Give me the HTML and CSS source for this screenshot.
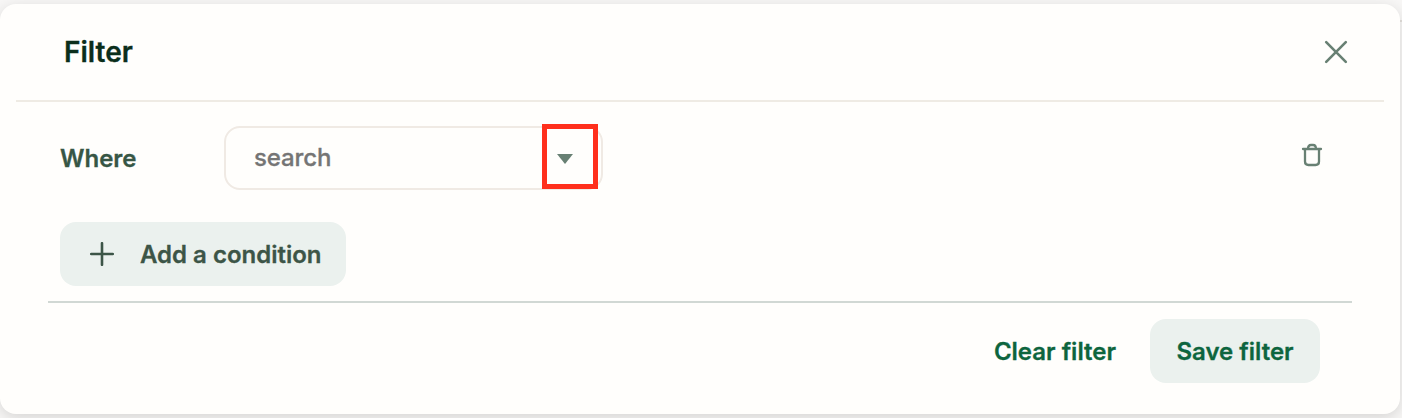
FILE: index.html
```
<!DOCTYPE html>
<html lang="en">
<head>
<meta charset="utf-8">
<title>Filter</title>
<link rel="stylesheet" href="styles.css">
</head>
<body>
<section class="dialog">
  <header class="dialog-header">
    <h1 class="title">Filter</h1>
    <button class="close" aria-label="Close">
      <svg width="24" height="24" viewBox="0 0 24 24"><path d="M2.2 2.2 21.8 21.8M21.8 2.2 2.2 21.8"/></svg>
    </button>
  </header>
  <div class="dialog-body">
    <div class="condition">
      <span class="label">Where</span>
      <div class="select">
        <span class="placeholder">search</span>
        <svg class="caret" width="16" height="10" viewBox="0 0 16 10"><path d="M0 0H16L8 10Z"/></svg>
        <span class="highlight"></span>
      </div>
      <button class="trash" aria-label="Delete">
        <svg width="22" height="24" viewBox="0 0 22 24"><path d="M2 6H20M4 6V18.5Q4 22 7.5 22H14.5Q18 22 18 18.5V6M7 6Q7 2 10 2H12Q15 2 15 6"/></svg>
      </button>
    </div>
    <button class="button add">
      <svg width="24" height="24" viewBox="0 0 24 24"><path d="M12 1.2V22.8M1.2 12H22.8"/></svg>
      <span class="add-text">Add a condition</span>
    </button>
  </div>
  <footer class="dialog-footer">
    <button class="clear">Clear filter</button>
    <button class="button save">Save filter</button>
  </footer>
</section>
</body>
</html>
```
FILE: styles.css
```
* { box-sizing: border-box; }
body {
  margin: 0;
  height: 418px;
  overflow: hidden;
  padding: 4px 2px 4px 0;
  background: linear-gradient(#e3e0dc, #e3e0dc) right 20px / 2px 2px no-repeat, #f8f7f6;
  font-family: Inter, sans-serif;
  font-size: 24px;
  line-height: 32px;
  -webkit-text-stroke: 0.3px currentColor;
}
button {
  border: 0;
  padding: 0;
  background: none;
  font: inherit;
  font-weight: 600;
}
svg {
  display: block;
  flex: none;
  fill: none;
  stroke: #688073;
  stroke-width: 2.6;
  stroke-linecap: round;
}
.dialog {
  height: 410px;
  border-radius: 16px;
  background: #fffefc;
  box-shadow: 0 4px 16px rgba(0, 0, 0, 0.14);
}
.dialog-header {
  display: flex;
  align-items: center;
  justify-content: space-between;
  height: 98px;
  margin: 0 16px;
  padding: 0 36px 0 48px;
  border-bottom: 2px solid #efebe4;
}
.title {
  margin: 0;
  color: #0b2e1b;
  font-size: 28px;
  font-weight: 600;
}
.dialog-body {
  height: 201px;
  margin: 0 48px;
  padding: 24px 12px 0;
  border-bottom: 2px solid #d1d8d4;
}
.condition {
  display: flex;
  align-items: center;
  height: 64px;
}
.label {
  width: 164px;
  padding-top: 2px;
  color: #375645;
  font-weight: 600;
}
.select {
  position: relative;
  display: flex;
  align-items: center;
  justify-content: space-between;
  width: 379px;
  height: 64px;
  padding: 0 28px;
  border: 2px solid #f0eae4;
  border-radius: 16px;
}
.placeholder {
  color: #757575;
  font-weight: 500;
  letter-spacing: -0.1px;
}
.caret {
  margin-top: 2px;
  fill: #688073;
  stroke: none;
}
.highlight {
  position: absolute;
  top: -4px;
  right: 3px;
  width: 56px;
  height: 65px;
  border: 5px solid #ff2f1c;
}
.trash { margin: 0 17px 6px auto; }
.trash svg { stroke-width: 2.3; }
.button {
  display: flex;
  align-items: center;
  height: 64px;
  border-radius: 16px;
  background: #ebf1ee;
}
.add {
  width: 286px;
  margin-top: 32px;
  padding-left: 30px;
  gap: 26px;
  color: #3c5547;
}
.add svg { stroke: #3c5547; }
.add-text { padding-top: 2px; }
.dialog-footer {
  display: flex;
  align-items: center;
  justify-content: flex-end;
  gap: 34px;
  padding: 16px 80px 0 0;
}
.clear, .save {
  padding-top: 2px;
  color: #0d653e;
}
.save { width: 170px; justify-content: center; }
```
